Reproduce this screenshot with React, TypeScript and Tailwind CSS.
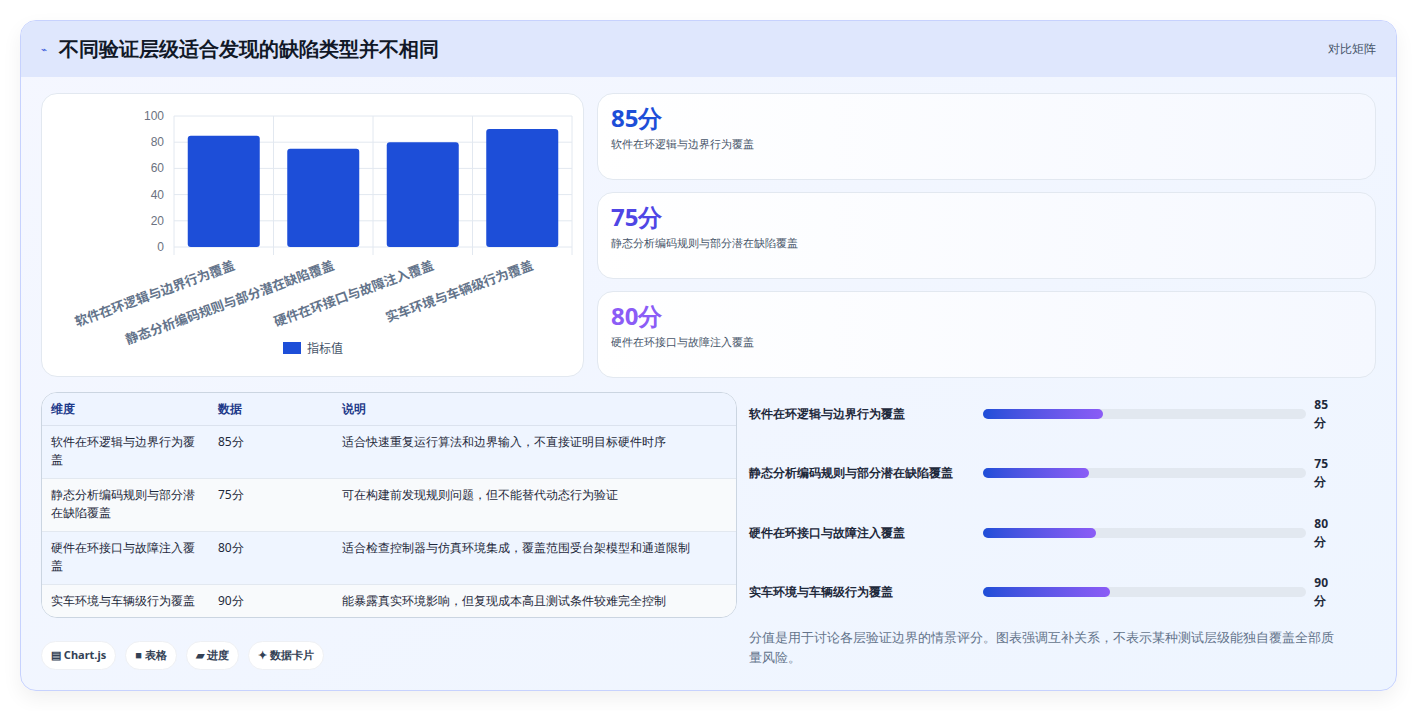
import React from "react";

const rows = [
  { n: "软件在环逻辑与边界行为覆盖", v: 85, d: "适合快速重复运行算法和边界输入，不直接证明目标硬件时序", w: 120 },
  { n: "静态分析编码规则与部分潜在缺陷覆盖", v: 75, d: "可在构建前发现规则问题，但不能替代动态行为验证", w: 106 },
  { n: "硬件在环接口与故障注入覆盖", v: 80, d: "适合检查控制器与仿真环境集成，覆盖范围受台架模型和通道限制", w: 113 },
  { n: "实车环境与车辆级行为覆盖", v: 90, d: "能暴露真实环境影响，但复现成本高且测试条件较难完全控制", w: 127 },
];

function Chart() {
  const x0 = 132, x1 = 530, y0 = 22, y1 = 153;
  const cw = (x1 - x0) / 4;
  return (
    <svg width="540" height="276" className="block">
      {[0, 20, 40, 60, 80, 100].map((t) => {
        const y = y1 - ((y1 - y0) * t) / 100;
        return (
          <g key={t}>
            <line x1={x0} x2={x1} y1={y} y2={y} stroke="#e2e8f0" />
            <text x={x0 - 10} y={y + 4} textAnchor="end" fontSize="12" fill="#6b7280" fontFamily="Liberation Sans, sans-serif">{t}</text>
          </g>
        );
      })}
      {[0, 1, 2, 3, 4].map((i) => (
        <line key={i} x1={x0 + cw * i} x2={x0 + cw * i} y1={y0} y2={y1 + 8} stroke="#e2e8f0" />
      ))}
      {rows.map((r, i) => {
        const h = ((y1 - y0) * r.v) / 100;
        const cx = x0 + cw * i + cw / 2;
        return (
          <g key={i}>
            <rect x={cx - 36} y={y1 - h} width={72} height={h} rx={3} fill="#1d4ed8" />
            <text x={cx + 12} y={y1 + 22} textAnchor="end" fontSize="13" fontWeight="700" fill="#64748b" transform={`rotate(-20 ${cx + 12} ${y1 + 22})`} fontFamily="Noto Sans CJK SC, sans-serif">{r.n}</text>
          </g>
        );
      })}
      <rect x={241} y={248} width={18} height={12} fill="#1d4ed8" />
      <text x={265} y={259} fontSize="12" fill="#475569" fontFamily="Noto Sans CJK SC, sans-serif">指标值</text>
    </svg>
  );
}

export default function App() {
  const colors = ["text-[#1d4ed8]", "text-[#4f46e5]", "text-[#8b5cf6]"];
  return (
    <div className="w-[1417px] h-[711px] bg-white p-5 font-['Noto_Sans_CJK_SC','Noto_Sans',sans-serif]">
      <div className="h-[671px] w-[1377px] rounded-2xl border border-[#c7d2fe] bg-gradient-to-br from-[#f5f7ff] to-[#eef5ff] shadow-[0_8px_20px_rgba(0,0,0,0.06)] overflow-hidden">
        <div className="h-[56px] bg-[#dfe7fd] flex items-center justify-between px-5">
          <div className="flex items-center gap-3">
            <span className="text-[#3b5bdb] text-[10px]">⌁</span>
            <span className="text-[20px] font-bold text-[#111827]">不同验证层级适合发现的缺陷类型并不相同</span>
          </div>
          <span className="text-[12px] text-[#475569]">对比矩阵</span>
        </div>
        <div className="px-5 pt-[16px]">
          <div className="flex gap-[13px]">
            <div className="w-[543px] h-[284px] bg-white rounded-2xl border border-[#e2e8f0] pt-0">
              <Chart />
            </div>
            <div className="flex-1 flex flex-col gap-[12px]">
              {rows.slice(0, 3).map((r, i) => (
                <div key={i} className="h-[87px] rounded-2xl border border-[#e2e8f0] bg-gradient-to-r from-white to-[#f5f8ff] px-[13px] pt-[8px]">
                  <div className={`text-[24px] font-bold leading-[32px] ${colors[i]}`}>{r.v}分</div>
                  <div className="text-[11px] text-[#475569] mt-[2px]">{r.n}</div>
                </div>
              ))}
            </div>
          </div>
          <div className="flex mt-[14px]">
            <div className="w-[696px]">
              <div className="rounded-2xl border border-[#cbd5e1] overflow-hidden text-[12px] text-[#1e293b] bg-white">
                <div className="flex h-[33px] items-center bg-[#eef4ff] font-bold text-[#1e3a8a] border-b border-[#dbe2ee]">
                  <div className="w-[176px] pl-[9px]">维度</div>
                  <div className="w-[124px]">数据</div>
                  <div>说明</div>
                </div>
                {rows.map((r, i) => (
                  <div key={i} className={`flex py-[7px] leading-[18px] ${i % 2 ? "bg-[#f8fafc]" : "bg-[#eff5ff]"} ${i < 3 ? "border-b border-[#e2e8f0] min-h-[53px]" : ""}`}>
                    <div className="w-[176px] pl-[9px] pr-[20px]">{r.n}</div>
                    <div className="w-[124px]">{r.v}分</div>
                    <div className="flex-1">{r.d}</div>
                  </div>
                ))}
              </div>
              <div className="flex gap-[9px] mt-[23px] text-[11px] font-bold text-[#334155]">
                {["▤ Chart.js", "■ 表格", "▰ 进度", "✦ 数据卡片"].map((t) => (
                  <span key={t} className="h-[29px] px-[9px] flex items-center rounded-full bg-white border border-[#eef0f4]">{t}</span>
                ))}
              </div>
            </div>
            <div className="flex-1 pl-[12px] pr-[36px] -mt-[11px]">
              {rows.map((r, i) => (
                <div key={i} className="flex items-center h-[59.5px] pt-[6px] text-[12px] font-bold text-[#1e293b]">
                  <div className="w-[234px]">{r.n}</div>
                  <div className="w-[324px] h-[10px] rounded-full bg-[#e2e8f0]">
                    <div className="h-full rounded-full bg-gradient-to-r from-[#1d4ed8] to-[#8b5cf6]" style={{ width: r.w }} />
                  </div>
                  <div className="ml-[8px]">{r.v}分</div>
                </div>
              ))}
              <p className="mt-[8px] text-[13px] leading-[20px] text-[#64748b]">分值是用于讨论各层验证边界的情景评分。图表强调互补关系，不表示某种测试层级能独自覆盖全部质量风险。</p>
            </div>
          </div>
        </div>
      </div>
    </div>
  );
}
